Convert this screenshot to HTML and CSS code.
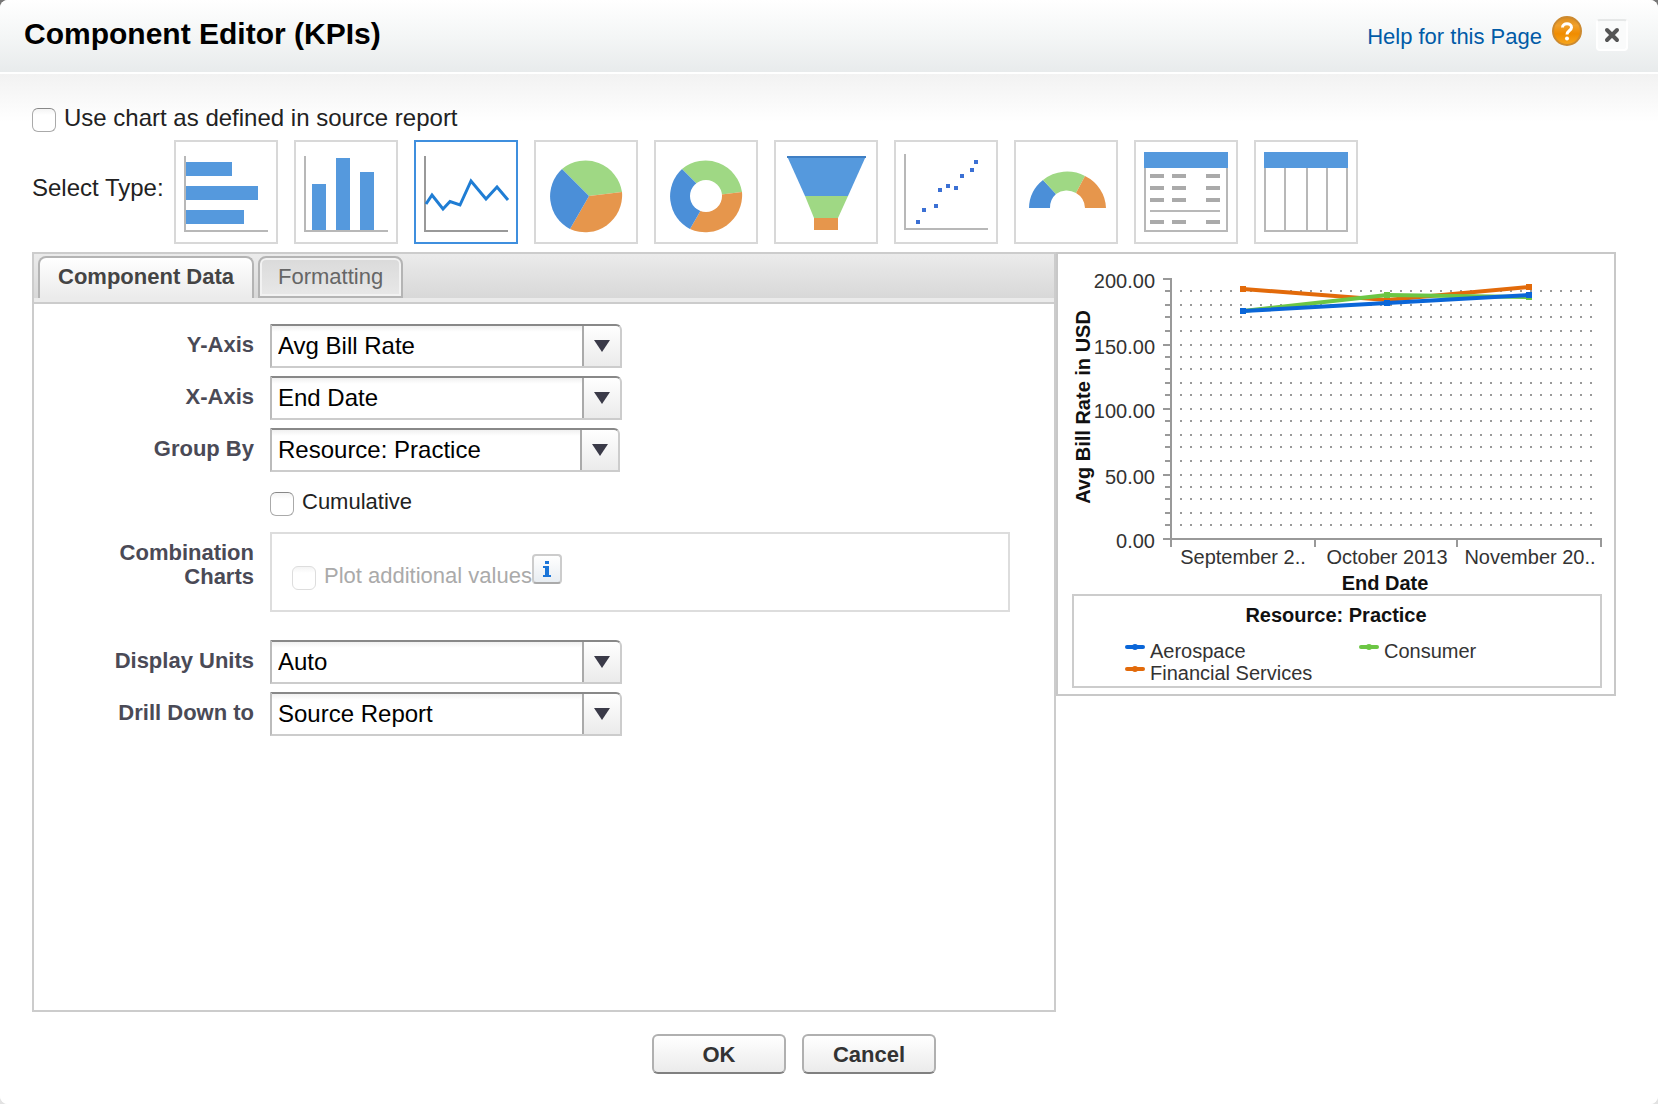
FILE: index.html
```html
<!DOCTYPE html>
<html lang="en">
<head>
<meta charset="utf-8">
<title>Component Editor (KPIs)</title>
<link rel="stylesheet" href="styles.css">
</head>
<body>
<div class="dialog" role="dialog" aria-labelledby="dialog-title">
  <header class="dialog-header">
    <h1 id="dialog-title">Component Editor (KPIs)</h1>
    <a class="help" href="#help">Help for this Page
      <svg width="30" height="30" viewBox="0 0 30 30" aria-hidden="true">
        <defs>
          <linearGradient id="orb" x1="0" y1="0" x2="0" y2="1">
            <stop offset="0" stop-color="#d98a1c"/><stop offset=".3" stop-color="#f0a02c"/>
            <stop offset=".6" stop-color="#f08c00"/><stop offset="1" stop-color="#f7a81e"/>
          </linearGradient>
        </defs>
        <circle cx="15" cy="15" r="14" fill="url(#orb)" stroke="#cc8a30" stroke-width="2"/>
        <path d="M10.500 11.500C10.500 6.500 19.500 6.500 19.500 11.500C19.500 14.500 15 14.500 15 18.500" fill="none" stroke="#fff" stroke-width="3"/>
        <circle cx="15" cy="22.500" r="2" fill="#fff"/>
      </svg>
    </a>
    <button class="close" type="button" aria-label="Close">
      <svg width="16" height="16" viewBox="0 0 16 16" aria-hidden="true">
        <path d="M3 3L13 13M13 3L3 13" stroke="#555" stroke-width="4" stroke-linecap="round"/>
      </svg>
    </button>
  </header>

  <form class="dialog-body">
    <label class="check check-large"><input type="checkbox"> Use chart as defined in source report</label>

    <div class="types" role="group" aria-labelledby="type-label">
      <span class="types-label" id="type-label">Select Type:</span>
      <button class="tile" type="button" aria-label="Horizontal bar chart">
        <svg viewBox="0 0 100 100"><path d="M9 14V89H92" class="axis"/><path class="blue" d="M10 20h46v14h-46zM10 44h72v14h-72zM10 68h58v14h-58z"/></svg>
      </button>
      <button class="tile" type="button" aria-label="Vertical bar chart">
        <svg viewBox="0 0 100 100"><path d="M9 14V89H92" class="axis"/><path class="blue" d="M16 42h14v46h-14zM40 16h14v72h-14zM64 30h14v58h-14z"/></svg>
      </button>
      <button class="tile" type="button" aria-label="Line chart" aria-pressed="true">
        <svg viewBox="0 0 100 100"><path d="M9 14V89H92" class="axis axis-dark"/><path d="M10 62L16 53L27 67L34 59.500L44 63L55 39L70 57L81 45L92 58" fill="none" stroke="#1f7dd4" stroke-width="3"/></svg>
      </button>
      <button class="tile" type="button" aria-label="Pie chart">
        <svg viewBox="0 0 100 100">
          <path class="green" d="M53 54L26 27A37 37 0 0 1 86 50Z"/>
          <path class="orange" d="M53 54L86 50A37 37 0 0 1 34 87Z"/>
          <path class="blue-deep" d="M53 54L34 87A37 37 0 0 1 26 27Z"/>
        </svg>
      </button>
      <button class="tile" type="button" aria-label="Donut chart">
        <svg viewBox="0 0 100 100">
          <path class="green" d="M53 54L26 27A37 37 0 0 1 86 50Z"/>
          <path class="orange" d="M53 54L86 50A37 37 0 0 1 34 87Z"/>
          <path class="blue-deep" d="M53 54L34 87A37 37 0 0 1 26 27Z"/>
          <circle cx="50" cy="54" r="16" fill="#fff"/>
        </svg>
      </button>
      <button class="tile" type="button" aria-label="Funnel chart">
        <svg viewBox="0 0 100 100">
          <path class="blue" d="M11 14H90L72 54H29Z"/><path class="green" d="M29 54H72L62 76H38Z"/><path class="orange" d="M38 76h24v12h-24z"/>
          <path d="M11 15H90" stroke="#3f7fc4" stroke-width="2"/>
        </svg>
      </button>
      <button class="tile" type="button" aria-label="Scatter chart">
        <svg viewBox="0 0 100 100"><path d="M9 12V87H92" class="axis"/>
          <path fill="#3b70d4" d="M20 78h4v4h-4zM26 66h4v4h-4zM38 62h4v4h-4zM42 46h4v4h-4zM50 42h4v4h-4zM58 44h4v4h-4zM64 32h4v4h-4zM74 26h4v4h-4zM78 18h4v4h-4z"/></svg>
      </button>
      <button class="tile" type="button" aria-label="Gauge">
        <svg viewBox="0 0 100 100">
          <path class="blue-deep" d="M13 66A38 37 0 0 1 27 38L40 52A18 18 0 0 0 34 66Z"/>
          <path class="green" d="M27 38A38 37 0 0 1 69 34L60 51A18 18 0 0 0 40 52Z"/>
          <path class="orange" d="M69 34A38 37 0 0 1 90 66H69A18 18 0 0 0 60 51Z"/>
        </svg>
      </button>
      <button class="tile" type="button" aria-label="Metric table">
        <svg viewBox="0 0 100 100">
          <path d="M9 24V89H91V24" class="axis"/><path class="blue" d="M8 10h84v16h-84z"/>
          <path d="M14 34H28M36 34H50M70 34H84M14 46H28M36 46H50M70 46H84M14 58H28M36 58H50M70 58H84M14 80H28M36 80H50M70 80H84" stroke="#aaa" stroke-width="4"/>
          <path d="M14 69H84" class="axis"/>
        </svg>
      </button>
      <button class="tile" type="button" aria-label="Table">
        <svg viewBox="0 0 100 100"><path d="M9 24V89H91V24M29 24V89M51 24V89M71 24V89" class="axis"/><path class="blue" d="M8 10h84v16h-84z"/></svg>
      </button>
    </div>

    <div class="workspace">
      <section class="panel">
        <div class="tabs" role="tablist">
          <button class="tab" type="button" role="tab" aria-selected="true">Component Data</button>
          <button class="tab" type="button" role="tab" aria-selected="false">Formatting</button>
        </div>
        <div class="fields">
          <label class="field-label" for="y-axis">Y-Axis</label>
          <div class="combo"><select id="y-axis"><option>Avg Bill Rate</option></select></div>
          <label class="field-label" for="x-axis">X-Axis</label>
          <div class="combo"><select id="x-axis"><option>End Date</option></select></div>
          <label class="field-label" for="group-by">Group By</label>
          <div class="combo combo-secondary"><select id="group-by"><option>Resource: Practice</option></select></div>
          <label class="check check-row"><input type="checkbox"> Cumulative</label>
          <span class="field-label field-label-multi" id="combination">Combination<br>Charts</span>
          <div class="combination" role="group" aria-labelledby="combination">
            <label class="check"><input type="checkbox" disabled> Plot additional values</label>
            <button class="info" type="button" aria-label="More information">
              <svg width="12" height="16" viewBox="0 0 12 16" aria-hidden="true"><path d="M4 0h4v3h-4zM2 5h6v9h2v2H2v-2h2V7H2z" fill="#1b75d8"/></svg>
            </button>
          </div>
          <label class="field-label" for="units">Display Units</label>
          <div class="combo"><select id="units"><option>Auto</option></select></div>
          <label class="field-label" for="drill">Drill Down to</label>
          <div class="combo"><select id="drill"><option>Source Report</option></select></div>
        </div>
      </section>

      <figure class="preview">
        <svg viewBox="1058 254 556 440" role="img" aria-label="Avg Bill Rate by End Date">
          <g stroke="#999" stroke-width="2" stroke-dasharray="2 8">
            <path d="M1180 291H1594M1180 305H1594M1180 317H1594M1180 331H1594M1180 345H1594M1180 357H1594M1180 369H1594M1180 383H1594M1180 395H1594M1180 409H1594M1180 421H1594M1180 435H1594M1180 447H1594M1180 461H1594M1180 475H1594M1180 487H1594M1180 499H1594M1180 513H1594M1180 525H1594"/>
          </g>
          <path fill="none" stroke="#999" stroke-width="2" d="M1163 279H1171V547M1163 539H1601V547M1315 539V547M1457 539V547M1163 345H1171M1163 409H1171M1163 475H1171M1165 291H1171M1165 305H1171M1165 317H1171M1165 331H1171M1165 357H1171M1165 369H1171M1165 383H1171M1165 395H1171M1165 421H1171M1165 435H1171M1165 447H1171M1165 461H1171M1165 487H1171M1165 499H1171M1165 513H1171M1165 525H1171"/>
          <g fill="none" stroke-width="4">
            <path stroke="#e26a0a" d="M1243 289L1387 300L1529 287"/>
            <path stroke="#6cc644" d="M1243 311L1387 295L1529 297"/>
            <path stroke="#0a66d8" d="M1243 311L1387 303L1529 295"/>
          </g>
          <path fill="#e26a0a" d="M1240 286h6v6h-6zM1526 284h6v6h-6z"/>
          <path fill="#6cc644" d="M1384 292h6v6h-6zM1526 294h6v6h-6z"/>
          <path fill="#0a66d8" d="M1240 308h6v6h-6zM1384 300h6v6h-6zM1526 292h6v6h-6z"/>
          <g class="chart-text" text-anchor="end">
            <text x="1155" y="288">200.00</text><text x="1155" y="354">150.00</text>
            <text x="1155" y="418">100.00</text><text x="1155" y="484">50.00</text><text x="1155" y="548">0.00</text>
          </g>
          <g class="chart-text" text-anchor="middle">
            <text x="1243" y="564">September 2..</text><text x="1387" y="564">October 2013</text><text x="1530" y="564">November 20..</text>
          </g>
          <g class="chart-title" text-anchor="middle">
            <text transform="translate(1090 407) rotate(-90)">Avg Bill Rate in USD</text>
            <text x="1385" y="590">End Date</text>
            <text x="1336" y="622">Resource: Practice</text>
          </g>
          <rect x="1073" y="595" width="528" height="92" fill="none" stroke="#ccc" stroke-width="2"/>
          <g stroke-width="4" stroke-linecap="round">
            <path stroke="#0a66d8" d="M1127 647H1143"/><path stroke="#6cc644" d="M1361 647H1377"/><path stroke="#e26a0a" d="M1127 669H1143"/>
          </g>
          <g><circle cx="1135" cy="647" r="3" fill="#0a66d8"/><circle cx="1369" cy="647" r="3" fill="#6cc644"/><circle cx="1135" cy="669" r="3" fill="#e26a0a"/></g>
          <g class="chart-text">
            <text x="1150" y="658">Aerospace</text><text x="1384" y="658">Consumer</text><text x="1150" y="680">Financial Services</text>
          </g>
        </svg>
      </figure>
    </div>

    <footer class="actions">
      <button class="btn" type="submit">OK</button>
      <button class="btn" type="button">Cancel</button>
    </footer>
  </form>
</div>
</body>
</html>
```
FILE: styles.css
```css
* { box-sizing: border-box; }

body {
  margin: 0;
  background: linear-gradient(#777 50%, #e2e2e2 50%);
  color: #222;
  font: 22px/28px "Liberation Sans", Arial, sans-serif;
}

button, select, input { font: inherit; color: inherit; margin: 0; }
button { padding: 0; }
svg { display: block; }

.dialog {
  display: flex;
  flex-direction: column;
  min-height: 100vh;
  background: #fff;
  border-radius: 8px;
  overflow: hidden;
}

.dialog-header {
  display: flex;
  align-items: flex-start;
  height: 72px;
  padding: 16px 30px 0 24px;
  background: linear-gradient(#fff, #f4f6f6 50%, #e8ebec);
}
.dialog-header h1 {
  flex: 1;
  margin: 0;
  color: #000;
  font-size: 30px;
  line-height: 36px;
}
.help {
  display: flex;
  gap: 10px;
  color: #015ba7;
  line-height: 42px;
  text-decoration: none;
}
.close {
  display: grid;
  place-items: center;
  width: 32px;
  height: 32px;
  margin: 3px 0 0 14px;
  background: #fafbfb;
  border: 2px solid #fff;
  border-top-color: #e6e8e8;
  border-radius: 4px;
}

.dialog-body {
  flex: 1;
  display: flex;
  flex-direction: column;
  gap: 8px;
  padding: 30px 42px 30px 32px;
  border-top: 2px solid #fff;
  background: linear-gradient(#f2f2f2, #fff 48px);
}

.check { display: flex; align-items: center; gap: 8px; }
.check-large { align-self: flex-start; font-size: 24px; }
.check input {
  appearance: none;
  width: 24px;
  height: 24px;
  margin-top: 4px;
  background: linear-gradient(#f4f4f4, #fff 6px);
  border: 1px solid #aaa;
  border-top-color: #888;
  border-radius: 6px;
}
.check:has(:disabled) { color: #aaa; }
.check input:disabled { border-color: #ddd; }

.types { display: flex; gap: 16px; }
.types-label {
  width: 126px;
  padding-bottom: 8px;
  align-self: center;
  font-size: 24px;
  white-space: nowrap;
}
.tile {
  width: 104px;
  height: 104px;
  background: #fff;
  border: 2px solid #d8d8d8;
}
.tile[aria-pressed="true"] { border-color: #3f8fde; }
.axis { fill: none; stroke: #b8b8b8; stroke-width: 2; }
.axis-dark { stroke: #999; }
.blue { fill: #5599dd; }
.blue-deep { fill: #4b8fd8; }
.green { fill: #9fd884; }
.orange { fill: #e6964c; }

.workspace {
  flex: 1;
  display: grid;
  grid-template-columns: 1024fr 560fr;
  align-items: start;
}
.panel { align-self: stretch; background: #fff; border: 2px solid #ccc; }
.tabs {
  display: flex;
  gap: 4px;
  height: 50px;
  padding: 2px 4px 0;
  background: linear-gradient(#ebebeb, #d8d8d8 44px, #ebebeb 44px);
  border-bottom: 2px solid #ccc;
}
.tab {
  height: 42px;
  padding: 0 18px;
  border: 2px solid #b4b4b4;
  border-radius: 8px 8px 0 0;
  background: linear-gradient(#dadada, #e8e8e8);
  box-shadow: inset 0 0 0 2px #f2f2f2;
  color: #666;
  line-height: 38px;
}
.tab[aria-selected="true"] {
  padding-bottom: 2px;
  border-bottom: 0;
  background: linear-gradient(#fff, #ebebeb);
  box-shadow: inset 0 2px 0 #fff;
  color: #444;
  font-weight: bold;
}

.fields {
  display: grid;
  grid-template-columns: 220px 1fr;
  gap: 8px 16px;
  padding: 20px 44px 20px 0;
}
.field-label {
  color: #4a4a56;
  font-weight: bold;
  line-height: 42px;
  text-align: right;
}
.field-label-multi { padding-top: 9px; line-height: 24px; }
.check-row { grid-column: 2; justify-self: start; height: 44px; }

.combo { position: relative; width: 352px; height: 44px; }
.combo-secondary { width: 350px; }
.combo select {
  appearance: none;
  width: 100%;
  height: 100%;
  padding: 0 44px 0 6px;
  border: 2px solid #ccc;
  border-top-color: #888;
  border-left-color: #bbb;
  border-radius: 0 6px 0 0;
  background:
    linear-gradient(#aaa, #aaa) right 36px top / 2px 100% no-repeat,
    linear-gradient(#fff, #ebebeb) right / 36px 100% no-repeat,
    linear-gradient(#f0f0f0, #fff 6px);
  color: #000;
  font-size: 24px;
}
.combo::after {
  content: "";
  position: absolute;
  right: 12px;
  top: 16px;
  border: solid transparent;
  border-width: 12px 8px 0;
  border-top-color: #3a3a48;
  pointer-events: none;
}

.combination {
  display: flex;
  align-items: flex-start;
  height: 80px;
  margin-bottom: 20px;
  padding: 20px;
  border: 2px solid #ddd;
}
.combination .check { margin-top: 8px; }
.info {
  display: grid;
  place-items: center;
  width: 30px;
  height: 30px;
  border: 2px solid #ccc;
  border-bottom-color: #aaa;
  border-radius: 4px;
  background: linear-gradient(#fff, #e8edf2);
}

.preview { margin: 0; background: #fff; border: 2px solid #c8c8c8; }
.chart-text { fill: #333; font-size: 20px; }
.chart-title { fill: #111; font-size: 20px; font-weight: bold; }

.actions {
  display: flex;
  justify-content: center;
  gap: 16px;
  padding: 14px 60px 0 0;
}
.btn {
  width: 134px;
  height: 40px;
  padding-top: 2px;
  border: 2px solid #b0b0b0;
  border-bottom-color: #808080;
  border-radius: 6px;
  background: linear-gradient(#fff, #ebebeb);
  color: #333;
  font-weight: bold;
}
```
